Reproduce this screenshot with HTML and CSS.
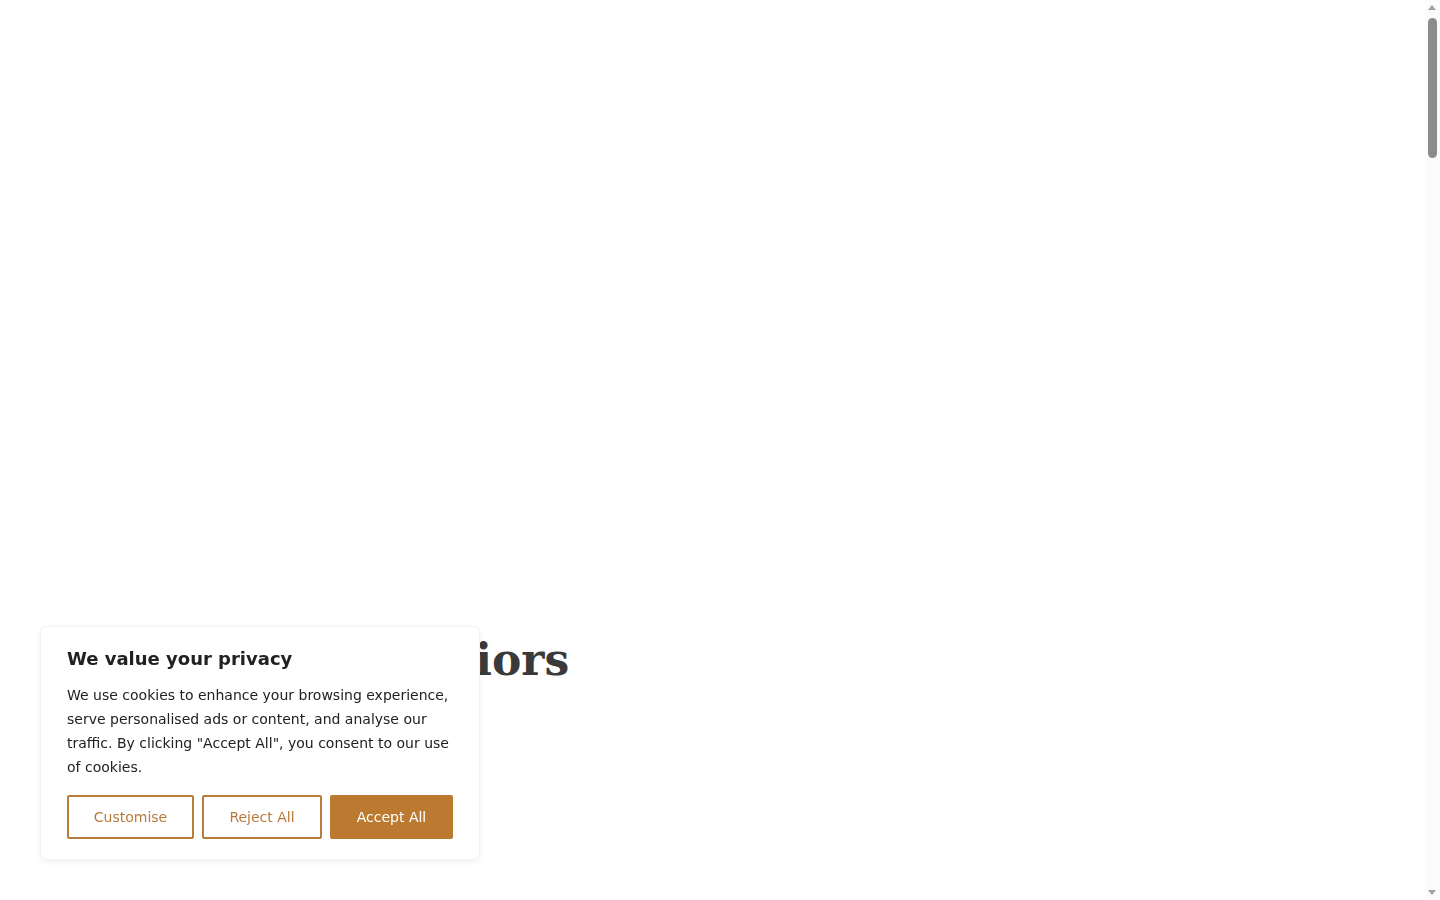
FILE: index.html
```html
<!DOCTYPE html>
<html lang="en">
<head>
<meta charset="utf-8">
<title>We value your privacy</title>
<link rel="stylesheet" href="styles.css">
</head>
<body>
<main class="page">
  <section class="hero">
    <h1 class="hero-title">Luxury Interiors</h1>
  </section>
</main>
<div class="cookie-banner" role="dialog" aria-label="We value your privacy">
  <p class="cookie-title">We value your privacy</p>
  <p class="cookie-text">We use cookies to enhance your browsing experience, serve personalised ads or content, and analyse our traffic. By clicking "Accept All", you consent to our use of cookies.</p>
  <div class="cookie-actions">
    <button class="btn btn-outline btn-customise">Customise</button>
    <button class="btn btn-outline btn-reject">Reject All</button>
    <button class="btn btn-solid btn-accept">Accept All</button>
  </div>
</div>
<div class="fake-scrollbar" aria-hidden="true">
  <span class="sb-arrow sb-up"></span>
  <span class="sb-thumb"></span>
  <span class="sb-arrow sb-down"></span>
</div>
</body>
</html>
```
FILE: styles.css
```css
html, body {
  margin: 0;
  padding: 0;
  background: #ffffff;
}
html {
  scrollbar-width: none;
}
html::-webkit-scrollbar {
  display: none;
}
body {
  font-family: "DejaVu Sans", sans-serif;
}
.page {
  min-height: 5600px;
  padding-right: 15px;
}
.hero {
  padding: 634px 0 0 166px;
}
.hero-title {
  margin: 0;
  font-family: "DejaVu Serif", serif;
  font-weight: 700;
  font-size: 44px;
  line-height: 1.2;
  color: #3a3a3a;
}
.cookie-banner {
  position: fixed;
  left: 40px;
  bottom: 40px;
  width: 386px;
  padding: 19px 26px 20px;
  background: #ffffff;
  border: 1px solid #f3f3f3;
  border-radius: 6px;
  box-shadow: 0 2px 6px rgba(0, 0, 0, 0.06);
}
.cookie-title {
  margin: 0 0 11px;
  font-size: 18px;
  font-weight: 700;
  line-height: 26px;
  color: #212121;
}
.cookie-text {
  margin: 0 0 16px;
  font-size: 14px;
  line-height: 24px;
  color: #212121;
}
.cookie-actions {
  display: flex;
  gap: 8px;
}
.btn {
  height: 44px;
  box-sizing: border-box;
  font-family: "DejaVu Sans", sans-serif;
  font-size: 14px;
  border-radius: 2px;
  cursor: pointer;
}
.btn-outline {
  background: #ffffff;
  border: 2px solid #b87b3a;
  color: #b87b3a;
}
.btn-customise { width: 127px; }
.btn-reject { width: 120px; }
.btn-solid {
  width: 123px;
  background: #bb7a30;
  border: 2px solid #bb7a30;
  color: #ffffff;
}
.fake-scrollbar {
  position: fixed;
  top: 0;
  right: 0;
  width: 15px;
  height: 100%;
  background: #fbfbfb;
}
.sb-thumb {
  position: absolute;
  top: 18px;
  left: 3px;
  width: 9px;
  height: 140px;
  border-radius: 5px;
  background: #8c8c8c;
}
.sb-arrow {
  position: absolute;
  left: 3px;
  width: 0;
  height: 0;
  border-left: 4.5px solid transparent;
  border-right: 4.5px solid transparent;
}
.sb-up {
  top: 5px;
  border-bottom: 5px solid #a0a0a0;
}
.sb-down {
  bottom: 5px;
  border-top: 5px solid #a0a0a0;
}
```
